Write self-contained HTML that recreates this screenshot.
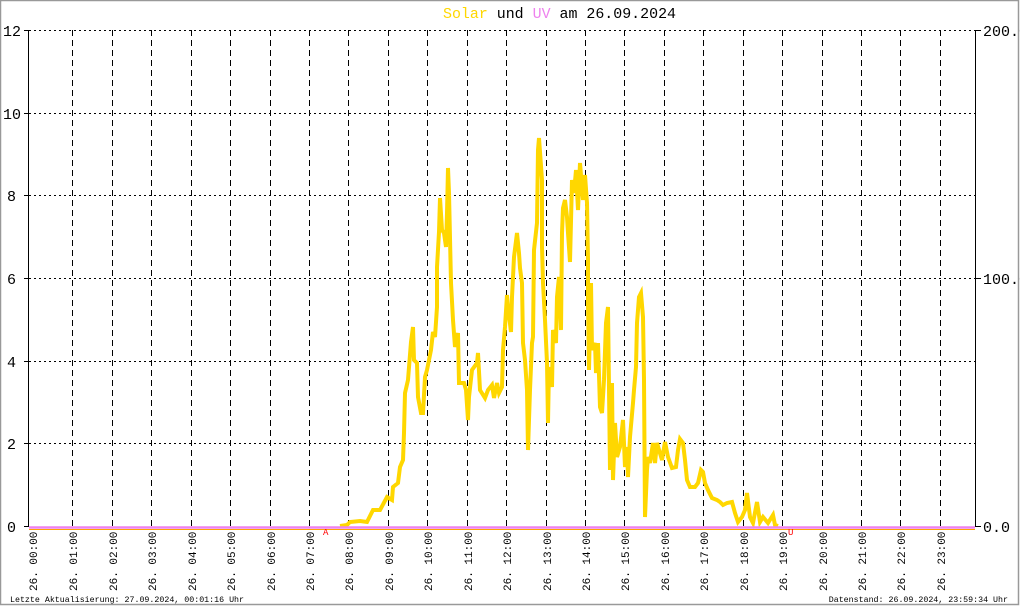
<!DOCTYPE html>
<html><head><meta charset="utf-8"><style>
html,body{margin:0;padding:0;background:#fff}
svg{display:block}
text{font-family:"Liberation Mono","DejaVu Sans Mono",monospace}
</style></head><body>
<svg width="1020" height="606" viewBox="0 0 1020 606" xmlns="http://www.w3.org/2000/svg">
<rect x="0.5" y="0.5" width="1018" height="604" fill="#fff" stroke="#999" stroke-width="1.5"/>
<text x="443" y="18" font-size="15" textLength="233" lengthAdjust="spacingAndGlyphs"><tspan fill="#FFD700">Solar</tspan><tspan fill="#000"> und </tspan><tspan fill="#EE82EE">UV</tspan><tspan fill="#000"> am 26.09.2024</tspan></text>
<g stroke="#000" stroke-width="1" stroke-dasharray="2,3">
<line x1="29" y1="30.5" x2="975" y2="30.5"/>
<line x1="29" y1="113.5" x2="975" y2="113.5"/>
<line x1="29" y1="195.5" x2="975" y2="195.5"/>
<line x1="29" y1="278.5" x2="975" y2="278.5"/>
<line x1="29" y1="361.5" x2="975" y2="361.5"/>
<line x1="29" y1="443.5" x2="975" y2="443.5"/>
</g>
<g stroke="#000" stroke-width="1" stroke-dasharray="6,4">
<line x1="72.5" y1="30" x2="72.5" y2="526"/><line x1="112.5" y1="30" x2="112.5" y2="526"/><line x1="151.5" y1="30" x2="151.5" y2="526"/><line x1="191.5" y1="30" x2="191.5" y2="526"/><line x1="230.5" y1="30" x2="230.5" y2="526"/><line x1="270.5" y1="30" x2="270.5" y2="526"/><line x1="309.5" y1="30" x2="309.5" y2="526"/><line x1="348.5" y1="30" x2="348.5" y2="526"/><line x1="388.5" y1="30" x2="388.5" y2="526"/><line x1="427.5" y1="30" x2="427.5" y2="526"/><line x1="467.5" y1="30" x2="467.5" y2="526"/><line x1="506.5" y1="30" x2="506.5" y2="526"/><line x1="546.5" y1="30" x2="546.5" y2="526"/><line x1="585.5" y1="30" x2="585.5" y2="526"/><line x1="624.5" y1="30" x2="624.5" y2="526"/><line x1="664.5" y1="30" x2="664.5" y2="526"/><line x1="703.5" y1="30" x2="703.5" y2="526"/><line x1="743.5" y1="30" x2="743.5" y2="526"/><line x1="782.5" y1="30" x2="782.5" y2="526"/><line x1="822.5" y1="30" x2="822.5" y2="526"/><line x1="861.5" y1="30" x2="861.5" y2="526"/><line x1="900.5" y1="30" x2="900.5" y2="526"/><line x1="940.5" y1="30" x2="940.5" y2="526"/>
</g>
<g stroke="#000" stroke-width="1">
<line x1="28.5" y1="30" x2="28.5" y2="527"/>
<line x1="975.5" y1="30" x2="975.5" y2="527"/>
<line x1="24" y1="30.5" x2="29" y2="30.5"/><line x1="24" y1="113.5" x2="29" y2="113.5"/><line x1="24" y1="195.5" x2="29" y2="195.5"/><line x1="24" y1="278.5" x2="29" y2="278.5"/><line x1="24" y1="361.5" x2="29" y2="361.5"/><line x1="24" y1="443.5" x2="29" y2="443.5"/><line x1="24" y1="526.5" x2="29" y2="526.5"/>
<line x1="975" y1="30.5" x2="981" y2="30.5"/><line x1="975" y1="278.5" x2="981" y2="278.5"/><line x1="975" y1="526.5" x2="981" y2="526.5"/>
</g>
<g font-size="15" fill="#000">
<text x="3" y="36">12</text><text x="3" y="119">10</text><text x="7" y="201">8</text><text x="7" y="284">6</text><text x="7" y="367">4</text><text x="7" y="449">2</text><text x="7" y="532">0</text>
<text x="983" y="36">200.0</text><text x="983" y="284">100.0</text><text x="983" y="532">0.0</text>
</g>
<polyline fill="none" stroke="#FFD700" stroke-width="4" stroke-linejoin="miter" points="340,526 347,525 350,522 360,521 367,522 373,510 380,510 387,497 392,500 393,487 398,483 400,467 403,460 404,433 405,393 408,380 411,342 413,327 414,360 417,363 418,397 421,413 423,413 425,377 427,370 431,350 433,332 435,337 437,307 437,267 439,232 440,198 442,230 444,233 446,247 447,213 448,168 449,193 451,283 453,320 455,347 458,333 459,383 464,383 466,390 468,420 469,397 472,370 477,363 478,353 480,390 485,398 488,390 492,385 494,398 497,383 499,393 502,387 503,350 505,327 507,295 508,307 511,332 512,297 514,257 517,233 519,253 520,268 522,283 523,343 525,360 527,390 528,450 530,390 532,343 533,337 534,250 537,223 538,150 539,138 542,180 542,247 543,283 545,320 547,363 548,423 549,367 552,387 553,330 556,343 557,297 559,277 561,330 562,233 563,208 565,200 567,217 568,233 570,262 572,180 574,193 576,170 578,210 580,163 583,200 585,175 587,203 588,260 588,303 589,370 591,283 592,350 595,343 596,373 598,343 600,407 602,413 604,380 606,323 608,307 610,470 612,383 613,480 615,423 617,457 620,447 623,420 625,467 627,447 628,477 630,437 633,403 634,390 636,367 637,323 639,297 641,293 643,317 644,380 645,517 647,470 648,457 650,463 653,443 655,463 657,443 662,460 665,442 668,457 672,468 676,467 678,450 680,439 683,443 685,460 687,480 690,487 695,487 698,483 701,470 703,472 705,483 708,490 712,498 717,500 720,502 723,505 727,503 732,502 735,513 738,522 742,517 745,510 747,493 750,517 753,523 757,502 760,522 763,517 768,523 773,515 775,525 778,526"/>
<line x1="29" y1="529.5" x2="975" y2="529.5" stroke="#FFA500" stroke-width="1"/>
<line x1="29" y1="527.5" x2="975" y2="527.5" stroke="#EE82EE" stroke-width="2.5"/>
<text x="323" y="535" font-size="9" fill="#f00">A</text>
<text x="788" y="535" font-size="9" fill="#f00">U</text>
<g font-size="11" fill="#000">
<text transform="translate(37,591) rotate(-90)">26. 00:00</text>
<text transform="translate(77,591) rotate(-90)">26. 01:00</text>
<text transform="translate(117,591) rotate(-90)">26. 02:00</text>
<text transform="translate(156,591) rotate(-90)">26. 03:00</text>
<text transform="translate(196,591) rotate(-90)">26. 04:00</text>
<text transform="translate(235,591) rotate(-90)">26. 05:00</text>
<text transform="translate(275,591) rotate(-90)">26. 06:00</text>
<text transform="translate(314,591) rotate(-90)">26. 07:00</text>
<text transform="translate(353,591) rotate(-90)">26. 08:00</text>
<text transform="translate(393,591) rotate(-90)">26. 09:00</text>
<text transform="translate(432,591) rotate(-90)">26. 10:00</text>
<text transform="translate(472,591) rotate(-90)">26. 11:00</text>
<text transform="translate(511,591) rotate(-90)">26. 12:00</text>
<text transform="translate(551,591) rotate(-90)">26. 13:00</text>
<text transform="translate(590,591) rotate(-90)">26. 14:00</text>
<text transform="translate(629,591) rotate(-90)">26. 15:00</text>
<text transform="translate(669,591) rotate(-90)">26. 16:00</text>
<text transform="translate(708,591) rotate(-90)">26. 17:00</text>
<text transform="translate(748,591) rotate(-90)">26. 18:00</text>
<text transform="translate(787,591) rotate(-90)">26. 19:00</text>
<text transform="translate(827,591) rotate(-90)">26. 20:00</text>
<text transform="translate(866,591) rotate(-90)">26. 21:00</text>
<text transform="translate(905,591) rotate(-90)">26. 22:00</text>
<text transform="translate(945,591) rotate(-90)">26. 23:00</text>
</g>
<text x="10" y="602" font-size="8.3" fill="#000">Letzte Aktualisierung: 27.09.2024, 00:01:16 Uhr</text>
<text x="1008" y="602" font-size="8.3" fill="#000" text-anchor="end">Datenstand: 26.09.2024, 23:59:34 Uhr</text>
</svg>
</body></html>
